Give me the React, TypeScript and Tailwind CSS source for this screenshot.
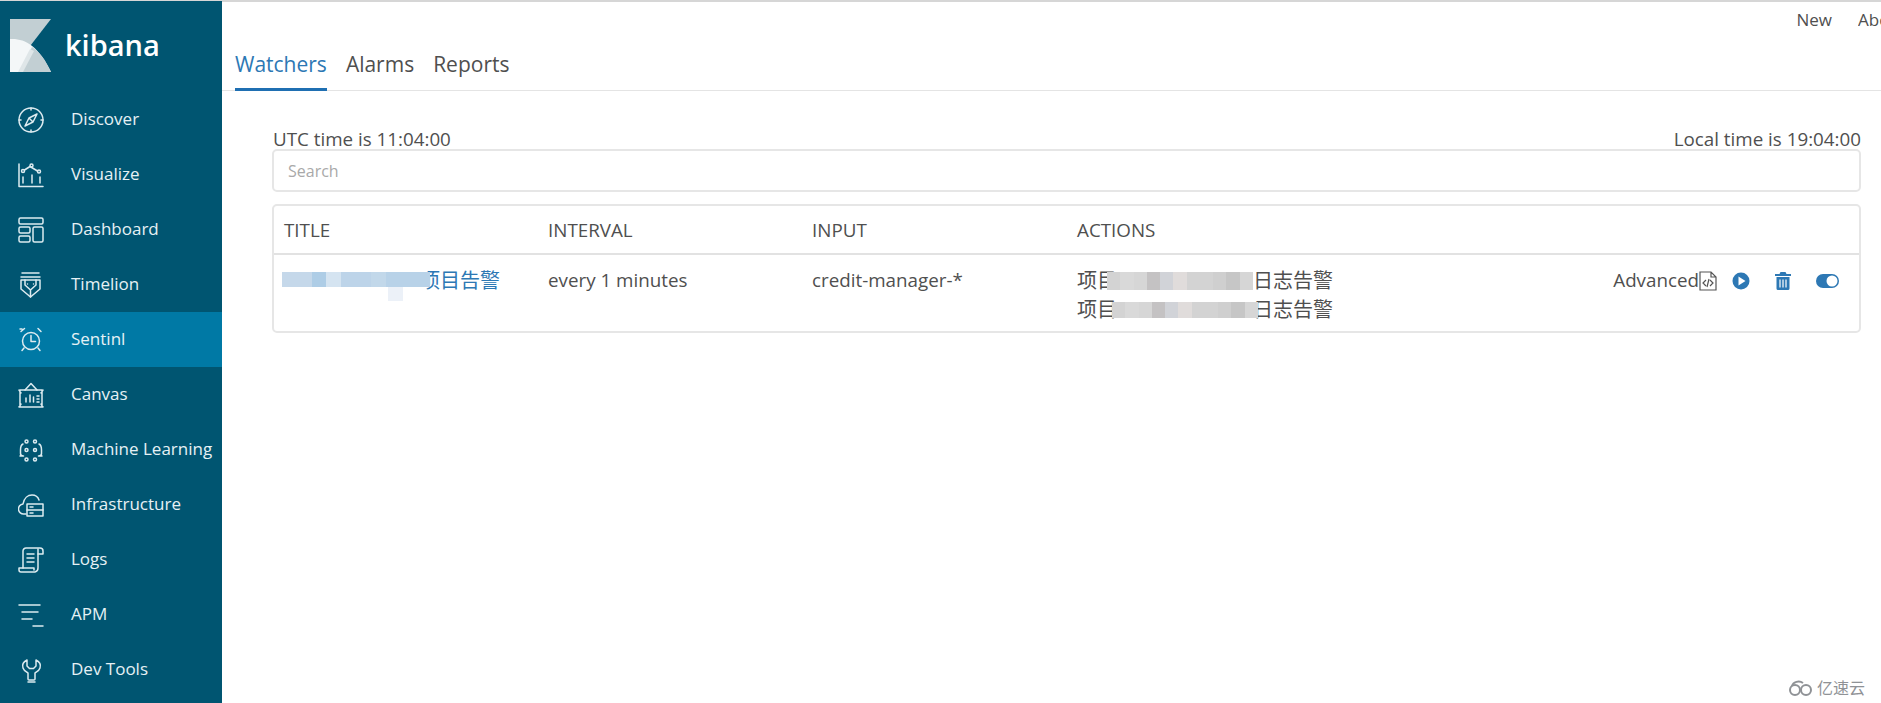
import type { ReactNode } from "react";

const FONT = "font-['Open_Sans','Noto_Sans_CJK_SC',sans-serif]";

function Icon({ children }: { children: ReactNode }) {
  return (
    <svg viewBox="0 0 26 26" className="h-[26px] w-[26px] shrink-0" fill="none" stroke="#dcebf0" strokeWidth="1.5" strokeLinecap="round" strokeLinejoin="round">
      {children}
    </svg>
  );
}

const NAV = [
  {
    label: "Discover",
    icon: (
      <>
        <circle cx="13" cy="13" r="12" />
        <path d="M19 7l-8 4-4 8 8-4zM11 11l4 4M13 1v2M13 23v2M1 13h2M23 13h2" />
      </>
    ),
  },
  {
    label: "Visualize",
    icon: (
      <>
        <path d="M1 2v22.500h24M5 21v-6M14 21v-8M22 21v-6" />
        <path d="M6.500 8l5.500-3.500 7.500 4.500" />
        <circle cx="5" cy="9" r="1.500" />
        <circle cx="13.500" cy="3.500" r="1.500" />
        <circle cx="21" cy="9.500" r="1.500" />
      </>
    ),
  },
  {
    label: "Dashboard",
    icon: (
      <>
        <rect x="1" y="1" width="24" height="6" rx="1.500" />
        <rect x="1" y="10" width="11" height="6" rx="1.500" />
        <rect x="1" y="19" width="11" height="6" rx="1.500" />
        <rect x="15" y="10" width="10" height="15" rx="1.500" />
      </>
    ),
  },
  {
    label: "Timelion",
    icon: (
      <>
        <path d="M4 1h17M3 5h19M3 8v9l9.500 8 9.500-8V8z" />
        <path d="M7 8v5l5.500 5 5.500-5V8M12.500 18v7M9.500 12h.01M15.500 12h.01" />
      </>
    ),
  },
  {
    label: "Sentinl",
    icon: (
      <>
        <circle cx="13" cy="14" r="8.500" />
        <path d="M13 8.500v6h4.500M3 4.500L6.500 1.500M4 2H2M20 1.500l3 3M6 21l-2 2.500M20 21l2 2.500" />
      </>
    ),
  },
  {
    label: "Canvas",
    icon: (
      <>
        <path d="M7 8l6-6.500L19 8" />
        <path d="M2 8h22v17H2zM1 8l2 3M25 8l-2 3M1 25l2-3M25 25l-2-3" />
        <path d="M8 20v-4M12 20v-7M15.500 20v-5M19 14h2M19 17h2M19 20h2" />
      </>
    ),
  },
  {
    label: "Machine Learning",
    icon: (
      <>
        <circle cx="8.500" cy="4.500" r="1.500" />
        <circle cx="17" cy="4.500" r="1.500" />
        <circle cx="8.500" cy="13" r="1.500" />
        <circle cx="17" cy="13" r="1.500" />
        <circle cx="8.500" cy="22.500" r="1.500" />
        <circle cx="17" cy="22.500" r="1.500" />
        <path d="M5 7C2.500 8 2.500 10 2.500 13v3.500c0 2 1.500 2.500 3 2.500M21 7c2.500 1 2.500 3 2.500 6v3.500c0 2-1.500 2.500-3 2.500M2 19l3.500 0M24 19l-3.500 0" />
      </>
    ),
  },
  {
    label: "Infrastructure",
    icon: (
      <>
        <path d="M8 22H6a5 5 0 0 1-1-10c1-6 5-9 9-9 3 0 6 2 7 5" />
        <rect x="9" y="12" width="16" height="12" />
        <path d="M9 18h16M12 15h3M12 21h3" />
      </>
    ),
  },
  {
    label: "Logs",
    icon: (
      <>
        <path d="M5 21V4a3 3 0 0 1 3-3h14a3 3 0 0 1 3 3v3h-5" />
        <path d="M20 2v19a4 4 0 0 1-3 4H3a2 2 0 0 1-2-2v-2h15v2" />
        <path d="M9 7h7M9 11h7M9 15h7" />
      </>
    ),
  },
  {
    label: "APM",
    icon: <path d="M1 3h21M4 10h16M4 17h10M15 24h10" />,
  },
  {
    label: "Dev Tools",
    icon: (
      <path d="M9 3C5 5 4 8 5 11c1 3 4 4 5 5v6c0 1 0 1 1 1h5c1 0 1 0 1-1v-6c1-1 4-2 5-5 1-3 0-6-4-8v6l-2.500 2.500h-4L9 9zM10 25h7" />
    ),
  },
];

function Redacted({ cells, className }: { cells: string[]; className: string }) {
  return (
    <div className={`relative z-10 flex shrink-0 ${className}`}>
      {cells.map((c, i) => (
        <div key={i} className="h-full flex-1" style={{ backgroundColor: c }} />
      ))}
    </div>
  );
}

const ACTION_CELLS = ["#d3d3d3", "#d9d9d9", "#d6d6d6", "#c4c2c3", "#d1d3d8", "#e0dcdb", "#d3d3d3", "#d3d3d3", "#cfcfcf", "#c6c6c6", "#d6d6d6"];
const TITLE_CELLS = ["#c5d8ea", "#c5d8ea", "#aecde6", "#d5e4f1", "#bdd4e9", "#bdd4e9", "#c2d8ea", "#b8d2e8", "#b8d2e8", "#b8d2e8"];

export default function App() {
  return (
    <div className={`flex h-[703px] w-full overflow-hidden border-t border-[#d6d6d6] bg-white text-[#4f4f4f] ${FONT}`}>
      <aside className="w-[222px] shrink-0 bg-[#005571] text-[#e6f1f5]">
        <div className="flex h-[91px] items-start pl-[10px] pt-[18px]">
          <svg viewBox="0 0 41 53" className="h-[53px] w-[41px] shrink-0">
            <path d="M0 0h41L0 53z" fill="#c2cfd3" />
            <path d="M0 20c14-1 28 6 41 33H0z" fill="#f4f7f8" />
            <path d="M22 28c8 5 14 14 19 25H9z" fill="#c2cfd3" />
            <path d="M8 53L20 30l4 2L13 53z" fill="#dfe6e8" />
          </svg>
          <span className="ml-[14px] mt-[8px] text-[29px] font-semibold leading-[36px] text-white">kibana</span>
        </div>
        <nav>
          {NAV.map((item) => (
            <div
              key={item.label}
              className={`flex h-[55px] items-center pl-[18px] text-[17px] ${item.label === "Sentinl" ? "bg-[#0079a5]" : ""}`}
            >
              <Icon>{item.icon}</Icon>
              <span className="ml-[27px] whitespace-nowrap pb-[2px]">{item.label}</span>
            </div>
          ))}
        </nav>
      </aside>

      <main className="relative min-w-0 flex-1 border-t border-[#d6d6d6]">
        <div className="flex h-[29px] justify-end gap-[26px] pt-[7px] text-[17px] leading-[22px]">
          <span>New</span>
          <span className="w-[23px] overflow-hidden">About</span>
        </div>
        <div className="flex h-[60px] items-start gap-[19px] border-b border-[#e4e4e4] pl-[13px] pt-[18px] text-[21px] leading-[30px]">
          <div className="h-[42px] border-b-[3px] border-[#1f6fb2] text-[#2d78b4]">Watchers</div>
          <div>Alarms</div>
          <div>Reports</div>
        </div>

        <section className="ml-[50px] mr-[20px] mt-[37px]">
          <div className="flex h-[21px] items-center justify-between pl-[1px] pt-[2px] text-[18.8px]">
            <span>UTC time is 11:04:00</span>
            <span>Local time is 19:04:00</span>
          </div>
          <div className="flex h-[43px] items-center rounded-[5px] border-2 border-[#e6e6e6] pl-[14px] text-[16px] text-[#a9a9a9]">
            Search
          </div>

          <div className="mt-[12px] h-[129px] rounded-[5px] border-2 border-[#e6e6e6] text-[18.8px]">
            <div className="grid h-[49px] grid-cols-[264px_264px_265px_1fr] items-center border-b-2 border-[#e2e2e2] pl-[10px] pt-[2px]">
              <span>TITLE</span>
              <span>INTERVAL</span>
              <span>INPUT</span>
              <span>ACTIONS</span>
            </div>
            <div className="grid grid-cols-[264px_264px_265px_1fr] pl-[10px] pt-[11px] leading-[29px]">
              <div className="relative h-[29px] text-[20px] text-[#2d78b4]">
                <span className="absolute left-[136px] top-0 whitespace-nowrap">项目告警</span>
                <Redacted cells={TITLE_CELLS} className="absolute -left-[2px] top-[6px] h-[15px] w-[148px]" />
                <div className="absolute left-[104px] top-[21px] h-[14px] w-[15px] bg-[#ecf1f8]" />
              </div>
              <span>every 1 minutes</span>
              <span>credit-manager-*</span>
              <div className="relative text-[20px]">
                <div className="flex h-[29px] items-center whitespace-nowrap">
                  <span>项目</span>
                  <Redacted cells={ACTION_CELLS} className="-ml-[10px] h-[18px] w-[146px]" />
                  <span>日志告警</span>
                </div>
                <div className="flex h-[29px] items-center whitespace-nowrap">
                  <span>项目</span>
                  <Redacted cells={ACTION_CELLS} className="-ml-[5px] h-[16px] w-[146px]" />
                  <span className="-ml-[5px]">日志告警</span>
                </div>
                <div className="absolute right-[20px] top-0 flex h-[29px] items-center text-[18.8px]">
                  <span>Advanced</span>
                  <svg viewBox="0 0 18 20" className="h-[20px] w-[18px]" fill="none" stroke="#555" strokeWidth="1.200">
                    <path d="M1 1h11l5 5v13H1zM12 1v5h5" />
                    <path d="M7 9l-3 3 3 3M11 9l3 3-3 3M10 8l-2 8" />
                  </svg>
                  <svg viewBox="0 0 18 18" className="ml-[15px] h-[18px] w-[18px]">
                    <circle cx="9" cy="9" r="8.500" fill="#2d78b4" />
                    <path d="M6.500 4.500l7 4.500-7 4.500z" fill="#fff" />
                  </svg>
                  <svg viewBox="0 0 16 18" className="ml-[25px] h-[18px] w-[16px]" fill="#2d78b4">
                    <path d="M5.500 0h5l1 2H16v2H0V2h4.500zM1.500 5h13v11.500a1.500 1.500 0 0 1-1.500 1.500H3a1.500 1.500 0 0 1-1.500-1.500z" />
                    <path d="M5 7.500v8M8 7.500v8M11 7.500v8" stroke="#fff" strokeWidth="1.200" />
                  </svg>
                  <svg viewBox="0 0 23 14" className="ml-[25px] h-[14px] w-[23px]">
                    <rect width="23" height="14" rx="7" fill="#2d78b4" />
                    <circle cx="16" cy="7" r="5.500" fill="#fff" />
                  </svg>
                </div>
              </div>
            </div>
          </div>
        </section>

        <div className="absolute bottom-[5px] right-[16px] flex items-center gap-[3px] text-[16px] leading-[20px] text-[#8f9296]">
          <svg viewBox="0 0 26 16" className="h-[16px] w-[26px]" fill="none" stroke="#8f9296" strokeWidth="2">
            <circle cx="7" cy="10" r="5" />
            <circle cx="18" cy="10" r="5" />
            <path d="M4 6c1-4 7-6 11-3" />
          </svg>
          <span>亿速云</span>
        </div>
      </main>
    </div>
  );
}
